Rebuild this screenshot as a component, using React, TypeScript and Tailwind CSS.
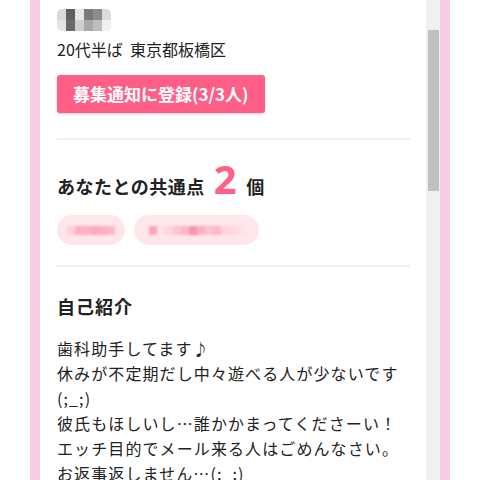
const font = { fontFamily: '"Noto Sans CJK JP", "Noto Sans", sans-serif' };

// gray mosaic standing in for the hidden name
const nameTiles = [
  ["#d8d8d8", "#5f5f5f", "#e6e6e6", "#7a7a7a", "#8c8c8c", "#dcdcdc"],
  ["#e4e4e4", "#6a6a6a", "#cfcfcf", "#a8a8a8", "#bdbdbd", "#f0f0f0"],
];

function Mosaic({ rows }: { rows: string[][] }) {
  return (
    <div className="flex flex-col blur-[0.6px]">
      {rows.map((row, i) => (
        <div key={i} className="flex">
          {row.map((c, j) => (
            <div key={j} className="w-[9px] h-[11px]" style={{ backgroundColor: c }} />
          ))}
        </div>
      ))}
    </div>
  );
}

function Chip({ width, tiles }: { width: number; tiles: string[] }) {
  return (
    <div className="h-[30px] rounded-full bg-[#ffe6eb] flex items-center justify-center" style={{ width }}>
      <div className="flex blur-[0.8px]">
        {tiles.map((c, i) => (
          <div key={i} className="w-[8px] h-[9px]" style={{ backgroundColor: c }} />
        ))}
      </div>
    </div>
  );
}

export default function App() {
  return (
    <div className="w-[480px] h-[480px] overflow-hidden bg-white flex text-[#222]" style={font}>
      <div className="w-[30px]" />
      <div className="w-[10px] bg-[#f8cde2]" />

      <main className="flex-1 pl-[17px] pr-[16px] pt-[9px]">
        <div className="h-[24px] flex items-start">
          <div className="rounded-[5px] overflow-hidden">
            <Mosaic rows={nameTiles} />
          </div>
        </div>

        <p className="mt-[4px] text-[16px] leading-[24px]">20代半ば&nbsp;&nbsp;東京都板橋区</p>

        <button className="mt-[14px] h-[38px] px-[16px] rounded-[3px] bg-[#ff5f87] text-white text-[17px] font-bold shadow-[0_1px_2px_rgba(0,0,0,0.2)]">
          募集通知に登録(3/3人)
        </button>

        <hr className="mt-[25px] border-0 h-[2px] bg-[#f0f0f0]" />

        <h2 className="mt-[22px] flex items-baseline font-bold text-[18px] tracking-[0.5px]">
          あなたとの共通点
          <span className="mx-[9px] text-[40px] leading-[34px] text-[#ff5f87]" style={{ fontFamily: '"Noto Sans", sans-serif' }}>2</span>
          個
        </h2>

        <div className="mt-[15px] flex gap-[9px]">
          <Chip width={68} tiles={["#ffd0da", "#fcb0c2", "#fbb4c4", "#fdaabd", "#fbb0c2", "#fdb8c8"]} />
          <Chip width={125} tiles={["#fba6ba", "#ffe0e7", "#ffd4dd", "#fdc4d0", "#fdb8c8", "#f995ad", "#fbb0c2", "#fdc2cf", "#fdb8c8", "#ffd4dd", "#ffd8e0", "#ffe0e7"]} />
        </div>

        <hr className="mt-[20px] border-0 h-[2px] bg-[#f0f0f0]" />

        <h2 className="mt-[27px] font-bold text-[18px] tracking-[1px] leading-[24px]">自己紹介</h2>

        <p className="mt-[18px] text-[16px] leading-[25px] tracking-[1.1px]">
          歯科助手してます♪<br />
          休みが不定期だし中々遊べる人が少ないです(;_;)<br />
          彼氏もほしいし…誰かかまってくださーい！<br />
          エッチ目的でメール来る人はごめんなさい。<br />
          お返事返しません…(;_;)
        </p>
      </main>

      <div className="w-[14px] bg-[#f0f0f0] pt-[30px] pl-[2px] pr-[1px]">
        <div className="h-[161px] bg-[#c0c0c0]" />
      </div>
      <div className="w-[10px] bg-[#f8cde2]" />
      <div className="w-[30px]" />
    </div>
  );
}
